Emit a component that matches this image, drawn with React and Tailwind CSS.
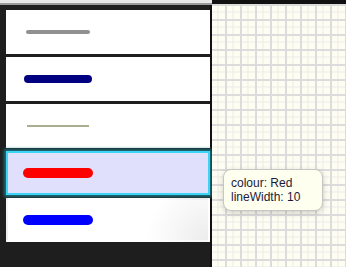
const LINES = [
  { id: "grey", bar: "h-[4px] w-[64px] bg-[#909090] rounded-[2px]" },
  { id: "navy", bar: "h-[8px] w-[68px] bg-[#000080] rounded-full" },
  { id: "olive", bar: "h-[2px] w-[62px] bg-[#a8ae90]" },
  { id: "red", bar: "h-[10px] w-[70px] bg-[#ff0000] rounded-full", selected: true },
  { id: "blue", bar: "h-[10px] w-[70px] bg-[#0000ff] rounded-full", shade: true },
];

function LineItem({ line }) {
  return (
    <div
      className={
        "h-[44px] flex items-center border-2 " +
        (line.selected
          ? "bg-[#e0e0fc] border-[#3dd5f5] shadow-[0_0_3px_2px_#1d6f7c]"
          : "border-transparent " +
            (line.shade
              ? "bg-[radial-gradient(circle_at_100%_100%,#ececec,#ffffff_30%)]"
              : "bg-white"))
      }
    >
      <div className="w-[100px] flex justify-center">
        <div className={line.bar} />
      </div>
    </div>
  );
}

export default function App() {
  return (
    <div className="w-[346px] h-[267px] flex overflow-hidden relative font-['Liberation_Sans',Arial,sans-serif]">
      {/* list panel */}
      <div className="w-[212px] h-full flex flex-col">
        <div className="h-[3px] bg-[#e8e8e8]" />
        <div className="h-[2px] bg-[#9a9a9a]" />
        <div className="flex-1 bg-[#1e1e1e] pt-[5px] pl-[6px] flex flex-col gap-[3px] border-r-2 border-[#111]">
          {LINES.map((l) => (
            <LineItem key={l.id} line={l} />
          ))}
        </div>
      </div>

      {/* canvas */}
      <div className="flex-1 h-full flex flex-col">
        <div className="h-[4px] bg-[#111]" />
        <div className="flex-1 bg-[#fdfdf2] bg-[linear-gradient(to_right,#dcdcdc_2px,transparent_2px),linear-gradient(to_bottom,#dcdcdc_2px,transparent_2px),linear-gradient(to_right,#ebebe6_1px,transparent_1px),linear-gradient(to_bottom,#ebebe6_1px,transparent_1px)] bg-[size:15px_15px,15px_15px,7.5px_7.5px,7.5px_7.5px] bg-[position:13px_0px,13px_0px,13px_0px,13px_0px]" />
      </div>

      {/* tooltip */}
      <div className="absolute left-[223px] top-[169px] w-[100px] h-[42px] rounded-[8px] border border-[#c6c6c6] bg-[#fffff0] shadow-[0_2px_6px_rgba(0,0,0,0.18)] px-[7px] pt-[6px] text-[12px] leading-[14px] text-[#1a1a3a]">
        <div>colour: Red</div>
        <div>lineWidth: 10</div>
      </div>
    </div>
  );
}
